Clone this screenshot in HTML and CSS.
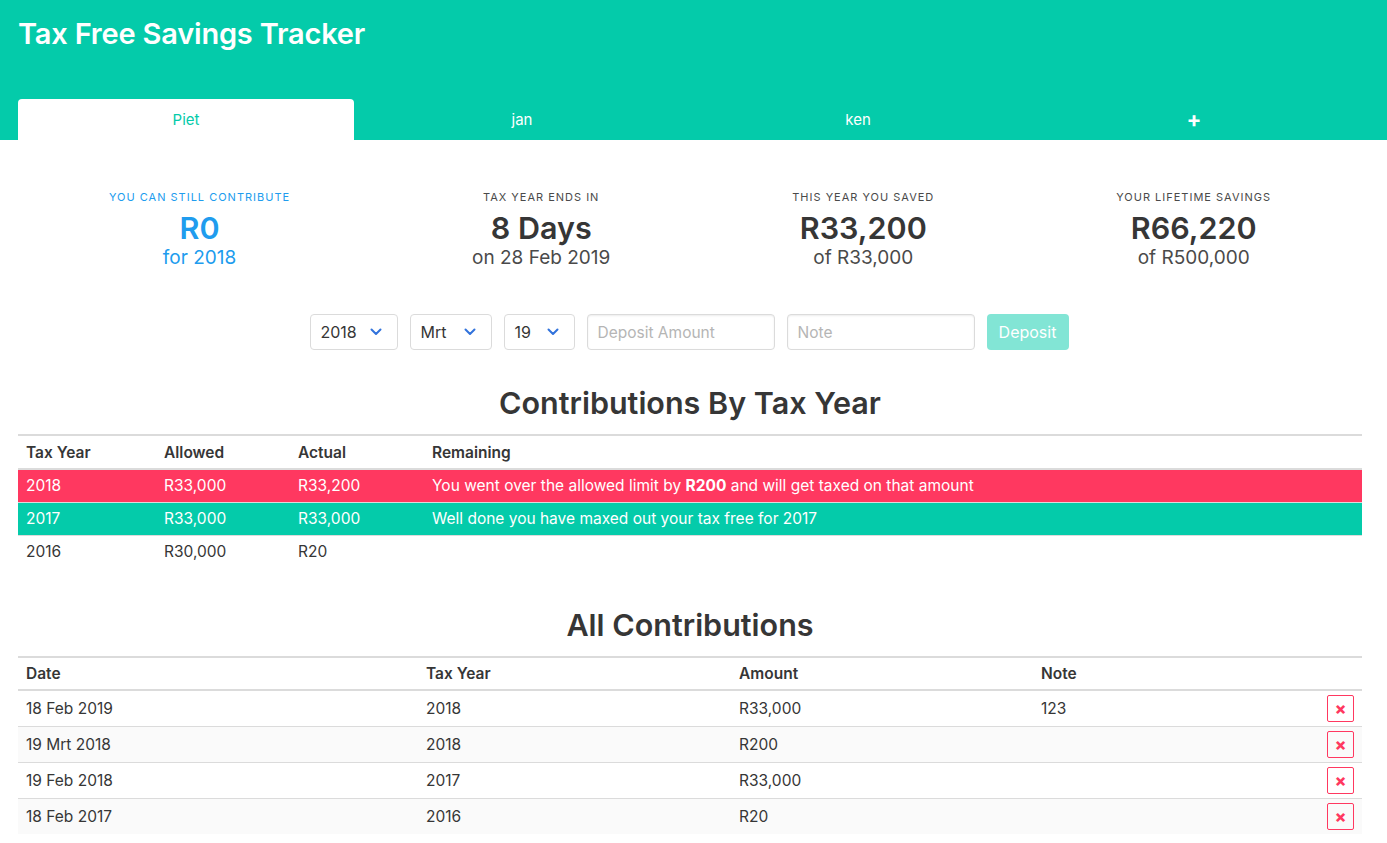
FILE: index.html
```html
<!DOCTYPE html>
<html>
<head>
<meta charset="utf-8">
<link rel="stylesheet" href="styles.css">
</head>
<body>
<header class="hero">
  <h1 class="hero-title">Tax Free Savings Tracker</h1>
  <nav class="tabs">
    <a class="tab active">Piet</a>
    <a class="tab">jan</a>
    <a class="tab">ken</a>
    <a class="tab plus">+</a>
  </nav>
</header>

<section class="stats">
  <div class="stat info">
    <p class="stat-head">You can still contribute</p>
    <p class="stat-main">R0</p>
    <p class="stat-sub">for 2018</p>
  </div>
  <div class="stat">
    <p class="stat-head">Tax year ends in</p>
    <p class="stat-main">8 Days</p>
    <p class="stat-sub">on 28 Feb 2019</p>
  </div>
  <div class="stat">
    <p class="stat-head">This year you saved</p>
    <p class="stat-main">R33,200</p>
    <p class="stat-sub">of R33,000</p>
  </div>
  <div class="stat">
    <p class="stat-head">Your lifetime savings</p>
    <p class="stat-main">R66,220</p>
    <p class="stat-sub">of R500,000</p>
  </div>
</section>

<form class="deposit-form">
  <div class="select w-year"><span>2018</span><svg class="chev" viewBox="0 0 12 8"><path d="M1.5 1.5 L6 6 L10.5 1.5" fill="none" stroke="#3273dc" stroke-width="2" stroke-linecap="round" stroke-linejoin="round"/></svg></div>
  <div class="select w-month"><span>Mrt</span><svg class="chev" viewBox="0 0 12 8"><path d="M1.5 1.5 L6 6 L10.5 1.5" fill="none" stroke="#3273dc" stroke-width="2" stroke-linecap="round" stroke-linejoin="round"/></svg></div>
  <div class="select w-day"><span>19</span><svg class="chev" viewBox="0 0 12 8"><path d="M1.5 1.5 L6 6 L10.5 1.5" fill="none" stroke="#3273dc" stroke-width="2" stroke-linecap="round" stroke-linejoin="round"/></svg></div>
  <input class="input" type="text" placeholder="Deposit Amount">
  <input class="input" type="text" placeholder="Note">
  <button class="btn" type="button">Deposit</button>
</form>

<h2 class="section-title">Contributions By Tax Year</h2>
<table class="table years">
  <thead>
    <tr><th class="c1">Tax Year</th><th class="c2">Allowed</th><th class="c3">Actual</th><th>Remaining</th></tr>
  </thead>
  <tbody>
    <tr class="danger"><td>2018</td><td>R33,000</td><td>R33,200</td><td>You went over the allowed limit by <strong>R200</strong> and will get taxed on that amount</td></tr>
    <tr class="success"><td>2017</td><td>R33,000</td><td>R33,000</td><td>Well done you have maxed out your tax free for 2017</td></tr>
    <tr class="plain"><td>2016</td><td>R30,000</td><td>R20</td><td></td></tr>
  </tbody>
</table>

<h2 class="section-title second">All Contributions</h2>
<table class="table all striped">
  <thead>
    <tr><th class="d1">Date</th><th class="d2">Tax Year</th><th class="d3">Amount</th><th>Note</th><th class="d5"></th></tr>
  </thead>
  <tbody>
    <tr><td>18 Feb 2019</td><td>2018</td><td>R33,000</td><td>123</td><td class="del-cell"><span class="del">×</span></td></tr>
    <tr><td>19 Mrt 2018</td><td>2018</td><td>R200</td><td></td><td class="del-cell"><span class="del">×</span></td></tr>
    <tr><td>19 Feb 2018</td><td>2017</td><td>R33,000</td><td></td><td class="del-cell"><span class="del">×</span></td></tr>
    <tr><td>18 Feb 2017</td><td>2016</td><td>R20</td><td></td><td class="del-cell"><span class="del">×</span></td></tr>
  </tbody>
</table>
</body>
</html>
```

FILE: styles.css
```css
* { box-sizing: border-box; }
html, body { margin: 0; padding: 0; }
body {
  font-family: Inter, "Noto Sans", "Liberation Sans", sans-serif;
  color: #4a4a4a;
  background: #fff;
  font-size: 16px;
}
p { margin: 0; }

.hero {
  background: #04cbaa;
  padding: 16px 25px 0 18px;
}
.hero-title {
  margin: 0;
  color: #fff;
  font-size: 29px;
  font-weight: 600;
  line-height: 36px;
  letter-spacing: -0.2px;
}
.tabs {
  display: flex;
  margin-top: 47px;
}
.tab {
  flex: 1 1 0;
  height: 41px;
  line-height: 41px;
  text-align: center;
  color: #fff;
  font-size: 15px;
  border-radius: 4px 4px 0 0;
}
.tab.active {
  background: #fff;
  color: #04cbaa;
}
.tab.plus {
  font-size: 22px;
  font-weight: 700;
}

.stats {
  display: flex;
  padding: 0 25px 0 18px;
  margin-top: 49px;
}
.stat {
  flex: 1 1 auto;
  text-align: center;
  color: #363636;
}
.stat-head {
  font-size: 11px;
  letter-spacing: 1px;
  text-transform: uppercase;
  line-height: 16px;
  color: #4a4a4a;
}
.stat-main {
  font-size: 30.5px;
  font-weight: 600;
  line-height: 36px;
  margin-top: 5px;
  color: #363636;
}
.stat-sub {
  font-size: 19px;
  line-height: 24px;
  color: #4a4a4a;
}
.stat.info .stat-head,
.stat.info .stat-main,
.stat.info .stat-sub { color: #209cee; }

.deposit-form {
  display: flex;
  justify-content: center;
  gap: 12px;
  margin-top: 44px;
  padding: 0 27px 0 18px;
}
.select {
  height: 36px;
  border: 1px solid #dbdbdb;
  border-radius: 4px;
  display: flex;
  align-items: center;
  justify-content: space-between;
  padding: 0 15px 0 10px;
  font-size: 16px;
  color: #363636;
}
.chev { width: 12px; height: 8px; }
.w-year { width: 88px; }
.w-month { width: 82px; }
.w-day { width: 71px; }
.input {
  height: 36px;
  width: 188px;
  border: 1px solid #dbdbdb;
  border-radius: 4px;
  padding: 0 10px;
  font: inherit;
  font-size: 15.5px;
  box-shadow: inset 0 1px 2px rgba(10,10,10,0.08);
}
.input::placeholder { color: #b5b5b5; }
.btn {
  height: 36px;
  width: 82px;
  border: none;
  border-radius: 4px;
  background: #82e5d5;
  color: #fff;
  font: inherit;
  font-size: 16px;
}

.section-title {
  text-align: center;
  font-size: 30.5px;
  font-weight: 600;
  color: #363636;
  margin: 34px 25px 12px 18px;
  line-height: 38px;
}
.section-title.second { margin-top: 38px; margin-bottom: 12px; }

.table {
  width: calc(100% - 43px);
  margin: 0 25px 0 18px;
  border-collapse: collapse;
  border-top: 2px solid #dbdbdb;
  font-size: 15.5px;
  color: #363636;
}
.table th {
  text-align: left;
  font-weight: 600;
  padding: 7px 8px 5px;
  line-height: 20px;
  border-bottom: 2px solid #dbdbdb;
}
.table td {
  padding: 6px 8px 6px;
  line-height: 20px;
  border-bottom: 1px solid #dbdbdb;
}
.years .c1 { width: 138px; }
.years .c2 { width: 134px; }
.years .c3 { width: 134px; }
.years tr.danger td { background: #ff3860; color: #fff; }
.years tr.success td { background: #04cbaa; color: #fff; }
.years tr.plain td { border-bottom: none; }
.years strong { font-weight: 700; }

.all .d1 { width: 400px; }
.all .d2 { width: 313px; }
.all .d3 { width: 302px; }
.all .d5 { width: 44px; }
.all th { padding: 6px 8px 5px; }
.all td { padding: 8px 8px 7px; }
.all.striped tbody tr:nth-child(even) td { background: #fafafa; }
.all tbody tr:last-child td { border-bottom: none; }
.del-cell { text-align: right; padding-right: 8px !important; padding-top: 4px !important; padding-bottom: 4px !important; }
.del {
  display: inline-block;
  width: 27px;
  height: 27px;
  border: 1px solid #ff3860;
  border-radius: 2px;
  color: #ff3860;
  font-weight: 800;
  font-size: 17px;
  line-height: 24px;
  text-align: center;
  vertical-align: middle;
}
```
